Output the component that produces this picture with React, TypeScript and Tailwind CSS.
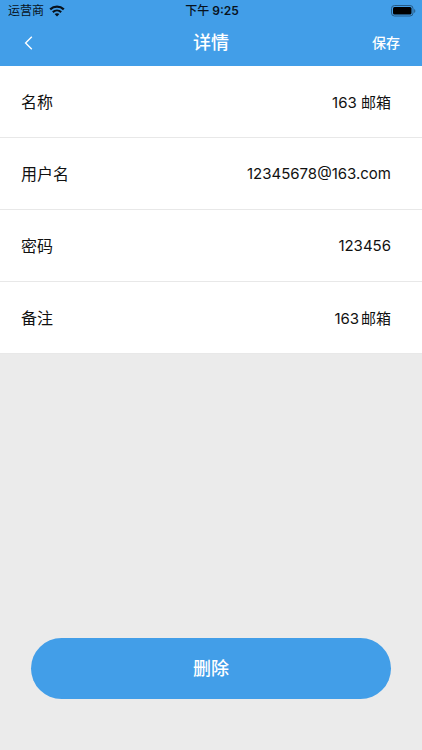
const fields = [
  { id: "name", label: "名称", value: "163 邮箱" },
  { id: "username", label: "用户名", value: "12345678@163.com" },
  { id: "password", label: "密码", value: "123456" },
  { id: "note", label: "备注", value: "163邮箱" },
];

function WifiIcon() {
  return (
    <svg className="h-3 w-4" viewBox="0 0 16 12" fill="none" stroke="#08121c" aria-hidden="true">
      <path d="M1.2 4.3C5.1.8 10.9.8 14.8 4.3" strokeWidth="2.3" />
      <path d="M3.8 7.1c2.4-2.1 6-2.1 8.4 0" strokeWidth="2.1" />
      <path d="M8 11.6 5.6 9.1c1.4-1.2 3.4-1.2 4.8 0Z" fill="#08121c" stroke="none" />
    </svg>
  );
}

function BatteryIcon() {
  return (
    <svg className="h-3 w-[25px]" viewBox="0 0 25 12" aria-hidden="true">
      <rect x="0.5" y="0.5" width="21.5" height="10.5" rx="3" fill="none" stroke="#265b86" />
      <rect x="2" y="2" width="18.5" height="7.5" rx="1.5" fill="#000" />
      <path d="M23.2 4v4c1.5-.7 1.5-3.3 0-4Z" fill="#265b86" />
    </svg>
  );
}

export default function App() {
  return (
    <div className="flex min-h-screen flex-col bg-[#ebebeb] font-['Inter','Noto_Sans_CJK_SC',sans-serif] text-[#111]">
      <header className="bg-[#429ee8]">
        <div className="grid h-[22px] grid-cols-3 items-center pl-2 pr-[6px] text-xs text-[#08121c]">
          <div className="flex items-center gap-[5px]">
            <span>运营商</span>
            <WifiIcon />
          </div>
          <span className="text-center font-medium">
            下午 <span className="font-semibold">9:25</span>
          </span>
          <div className="flex justify-end">
            <BatteryIcon />
          </div>
        </div>
        <nav className="grid h-11 grid-cols-3 items-center px-[22px] pb-[2px] text-white">
          <button type="button" aria-label="返回" className="flex h-8 w-8 items-center">
            <svg className="h-4 w-3" viewBox="0 0 12 16" fill="none" stroke="currentColor" strokeWidth="1.4">
              <path d="M9.8 1.8 3.6 8l6.2 6.2" />
            </svg>
          </button>
          <h1 className="text-center text-lg font-medium">详情</h1>
          <button type="button" className="justify-self-end text-sm font-medium">
            保存
          </button>
        </nav>
      </header>

      <form className="bg-white">
        {fields.map((field) => (
          <div key={field.id} className="flex h-[72px] items-center border-b border-[#e8e8e8] pl-[21px] pr-[31px] text-base">
            <label htmlFor={field.id} className="shrink-0">
              {field.label}
            </label>
            <input
              id={field.id}
              type="text"
              defaultValue={field.value}
              className="h-6 min-w-0 flex-1 bg-transparent text-right text-[15px] outline-none [text-autospace:normal]"
            />
          </div>
        ))}
      </form>

      <div className="mt-auto px-[31px] pb-[51px]">
        <button type="button" className="h-[61px] w-full rounded-full bg-[#429ee8] text-lg font-medium text-white">
          删除
        </button>
      </div>
    </div>
  );
}
